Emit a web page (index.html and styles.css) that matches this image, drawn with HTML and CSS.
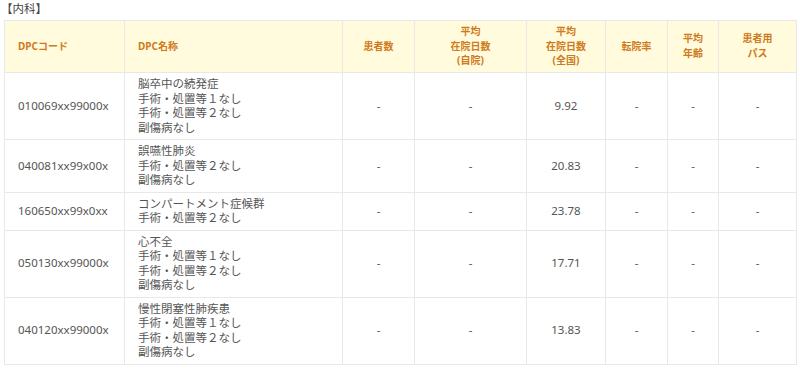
FILE: index.html
```html
<!DOCTYPE html>
<html lang="ja">
<head>
<meta charset="utf-8">
<link rel="stylesheet" href="styles.css">
</head>
<body>
<div class="page">
  <div class="title">【内科】</div>
  <table class="dpc">
    <colgroup>
      <col class="c1"><col class="c2"><col class="c3"><col class="c4"><col class="c5"><col class="c6"><col class="c7"><col class="c8">
    </colgroup>
    <thead>
      <tr>
        <th class="left">DPCコード</th>
        <th class="left">DPC名称</th>
        <th>患者数</th>
        <th>平均<br>在院日数<br>(自院)</th>
        <th>平均<br>在院日数<br>(全国)</th>
        <th>転院率</th>
        <th>平均<br>年齢</th>
        <th>患者用<br>パス</th>
      </tr>
    </thead>
    <tbody>
      <tr>
        <td class="left">010069xx99000x</td>
        <td class="left">脳卒中の続発症<br>手術・処置等１なし<br>手術・処置等２なし<br>副傷病なし</td>
        <td>-</td><td>-</td><td>9.92</td><td>-</td><td>-</td><td>-</td>
      </tr>
      <tr>
        <td class="left">040081xx99x00x</td>
        <td class="left">誤嚥性肺炎<br>手術・処置等２なし<br>副傷病なし</td>
        <td>-</td><td>-</td><td>20.83</td><td>-</td><td>-</td><td>-</td>
      </tr>
      <tr>
        <td class="left">160650xx99x0xx</td>
        <td class="left">コンパートメント症候群<br>手術・処置等２なし</td>
        <td>-</td><td>-</td><td>23.78</td><td>-</td><td>-</td><td>-</td>
      </tr>
      <tr>
        <td class="left">050130xx99000x</td>
        <td class="left">心不全<br>手術・処置等１なし<br>手術・処置等２なし<br>副傷病なし</td>
        <td>-</td><td>-</td><td>17.71</td><td>-</td><td>-</td><td>-</td>
      </tr>
      <tr>
        <td class="left">040120xx99000x</td>
        <td class="left">慢性閉塞性肺疾患<br>手術・処置等１なし<br>手術・処置等２なし<br>副傷病なし</td>
        <td>-</td><td>-</td><td>13.83</td><td>-</td><td>-</td><td>-</td>
      </tr>
    </tbody>
  </table>
</div>
</body>
</html>
```
FILE: styles.css
```css
html, body {
  margin: 0;
  padding: 0;
  background: #ffffff;
}
.page {
  padding: 0 4px;
  font-family: "Noto Sans", "Noto Sans CJK JP", sans-serif;
  color: #555555;
}
.title {
  font-size: 11.5px;
  line-height: 18px;
  height: 20px;
  color: #444444;
  margin-left: -3px;
}
.dpc {
  border-collapse: collapse;
  table-layout: fixed;
  width: 792px;
}
.c1 { width: 120px; }
.c2 { width: 218px; }
.c3 { width: 72px; }
.c4 { width: 112px; }
.c5 { width: 79px; }
.c6 { width: 62px; }
.c7 { width: 51px; }
.c8 { width: 78px; }
.dpc th,
.dpc td {
  border: 1px solid #e8e8e8;
  vertical-align: middle;
  text-align: center;
}
.dpc th {
  background: #fffbdc;
  color: #cf7a20;
  font-size: 10px;
  font-weight: bold;
  line-height: 14.6px;
  padding: 3px 4px 4px;
  height: 44px;
}
.dpc td {
  font-size: 11.5px;
  line-height: 14.5px;
  padding: 4px 4px;
}
.dpc th.left,
.dpc td.left {
  text-align: left;
  padding-left: 13px;
}
```
